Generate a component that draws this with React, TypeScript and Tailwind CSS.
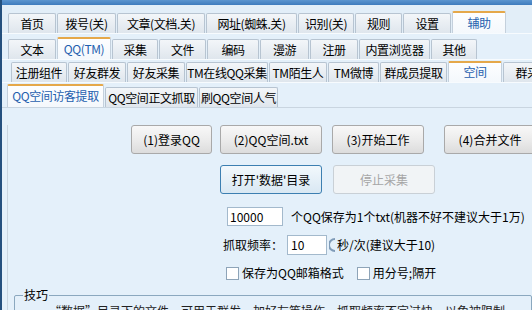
import React from "react";

type Tab = { label: string; w: number; active?: boolean };

const row1: Tab[] = [
  { label: "首页", w: 48 },
  { label: "拨号(关)", w: 59 },
  { label: "文章(文档.关)", w: 88 },
  { label: "网址(蜘蛛.关)", w: 91 },
  { label: "识别(关)", w: 56 },
  { label: "规则", w: 47 },
  { label: "设置", w: 48 },
  { label: "辅助", w: 54, active: true },
];

const row2: Tab[] = [
  { label: "文本", w: 48 },
  { label: "QQ(TM)", w: 54, active: true },
  { label: "采集", w: 46 },
  { label: "文件", w: 47 },
  { label: "编码", w: 52 },
  { label: "漫游", w: 49 },
  { label: "注册", w: 48 },
  { label: "内置浏览器", w: 71 },
  { label: "其他", w: 46 },
];

const row3: Tab[] = [
  { label: "注册组件", w: 56 },
  { label: "好友群发", w: 58 },
  { label: "好友采集", w: 58 },
  { label: "TM在线QQ采集", w: 82 },
  { label: "TM陌生人", w: 58 },
  { label: "TM微博", w: 51 },
  { label: "群成员提取", w: 67 },
  { label: "空间", w: 54, active: true },
  { label: "群采集", w: 60 },
];

const row4: Tab[] = [
  { label: "QQ空间访客提取", w: 97, active: true },
  { label: "QQ空间正文抓取", w: 93 },
  { label: "刷QQ空间人气", w: 79 },
];

function TabButton({ tab, h, ah }: { tab: Tab; h: string; ah: string }) {
  if (tab.active) {
    return (
      <div
        style={{ width: tab.w }}
        className={`${ah} shrink-0 flex items-center justify-center whitespace-nowrap tracking-[-0.4px] bg-gradient-to-b from-[#fdfeff] to-[#f4f8fc] border-x border-[#c4d0dc] border-t-2 border-t-[#e5a84a] rounded-t-[2px] text-[#1f5fae] pb-[1px]`}
      >
        {tab.label}
      </div>
    );
  }
  return (
    <div
      style={{ width: tab.w }}
      className={`${h} shrink-0 flex items-center justify-center whitespace-nowrap tracking-[-0.4px] bg-gradient-to-b from-[#f3f6f9] to-[#dfe6ed] border border-b-0 border-[#b7c4d1] rounded-t-[2px] text-black`}
    >
      {tab.label}
    </div>
  );
}

function Btn({ children, w, ml, focus, disabled }: { children: React.ReactNode; w: string; ml: string; focus?: boolean; disabled?: boolean }) {
  return (
    <div
      className={`${w} ${ml} h-[29px] shrink-0 flex items-center justify-center whitespace-nowrap rounded-[3px] border ${
        disabled
          ? "border-[#c9d0d6] bg-[#f1f4f6] text-[#a6a6a6]"
          : focus
          ? "border-[#3c7fb1] bg-gradient-to-b from-[#f2f8fc] to-[#d9e8f3] text-black"
          : "border-[#a9a9a9] bg-gradient-to-b from-[#f8f8f8] via-[#ececec] to-[#dcdcdc] text-black"
      }`}
    >
      {children}
    </div>
  );
}

export default function App() {
  return (
    <div
      className="relative w-[532px] h-[310px] overflow-hidden bg-[#e4f0fa] border-l-2 border-[#24507e] text-[12px] leading-none"
      style={{ fontFamily: '"Noto Sans CJK SC", "Liberation Sans", sans-serif' }}
    >
      <div className="h-[5px] bg-gradient-to-b from-[#5b95cf] to-[#3d7bbd]" />

      <div className="h-[28px] flex items-end gap-px pl-[6px] bg-[#e2eef8]">
        {row1.map((t) => (
          <TabButton key={t.label} tab={t} h="h-[20px]" ah="h-[22px]" />
        ))}
      </div>

      <div className="h-[26px] flex items-end gap-px pl-[6px] border-t border-[#f7fbfe]">
        {row2.map((t) => (
          <TabButton key={t.label} tab={t} h="h-[20px]" ah="h-[22px]" />
        ))}
      </div>

      <div className="h-[23px] flex items-end gap-px pl-[9px] border-t border-[#f7fbfe]">
        {row3.map((t) => (
          <TabButton key={t.label} tab={t} h="h-[20px]" ah="h-[21px]" />
        ))}
      </div>

      <div className="h-[26px] flex items-end gap-px pl-[5px] border-t border-[#f7fbfe] border-b border-b-[#c9d5e0]">
        {row4.map((t) => (
          <TabButton key={t.label} tab={t} h="h-[20px]" ah="h-[23px]" />
        ))}
      </div>

      <div className="ml-[5px] border-l border-[#c9d5e0] h-full">
        <div className="flex mt-[17px]">
          <Btn w="w-[81px]" ml="ml-[123px]">(1)登录QQ</Btn>
          <Btn w="w-[102px]" ml="ml-[8px]">(2)QQ空间.txt</Btn>
          <Btn w="w-[92px]" ml="ml-[10px]">(3)开始工作</Btn>
          <Btn w="w-[92px]" ml="ml-[20px]">(4)合并文件</Btn>
        </div>

        <div className="flex mt-[11px]">
          <Btn w="w-[102px]" ml="ml-[212px]" focus>
            打开'数据'目录
          </Btn>
          <Btn w="w-[102px]" ml="ml-[11px]" disabled>
            停止采集
          </Btn>
        </div>

        <div className="flex items-center mt-[13px] h-[19px]">
          <div className="ml-[219px] w-[56px] h-[19px] bg-white border border-[#a3b9cc] flex items-center pl-[2px]">10000</div>
          <span className="ml-[8px] whitespace-nowrap">个QQ保存为1个txt(机器不好不建议大于1万)</span>
        </div>

        <div className="flex items-center mt-[9px] h-[20px]">
          <span className="ml-[215px]">抓取频率：</span>
          <div className="ml-[4px] w-[40px] h-[20px] bg-white border border-[#a3b9cc] flex items-center pl-[3px]">10</div>
          <svg width="8" height="16" viewBox="0 0 8 16" className="ml-[2px]">
            <path d="M6 2 A6 6 0 0 0 6 14" fill="none" stroke="#7f9bb8" strokeWidth="2" />
          </svg>
          <span>秒/次(建议大于10)</span>
        </div>

        <div className="flex items-center mt-[11px] h-[14px]">
          <div className="ml-[218px] w-[13px] h-[13px] bg-white border border-[#8ea4b8]" />
          <span className="ml-[3px]">保存为QQ邮箱格式</span>
          <div className="ml-[13px] w-[13px] h-[13px] bg-white border border-[#8ea4b8]" />
          <span className="ml-[3px]">用分号;隔开</span>
        </div>

        <div className="relative mt-[15px] ml-[6px] border border-[#8ba8bf] rounded-[2px] h-[40px]">
          <span className="absolute -top-[7px] left-[8px] bg-[#e4f0fa] px-[1px] text-black">技巧</span>
          <div className="pt-[9px] pl-[34px] whitespace-nowrap text-[#222]">
            “数据”目录下的文件，可用于群发、加好友等操作，抓取频率不宜过快，以免被限制
          </div>
        </div>
      </div>
    </div>
  );
}
